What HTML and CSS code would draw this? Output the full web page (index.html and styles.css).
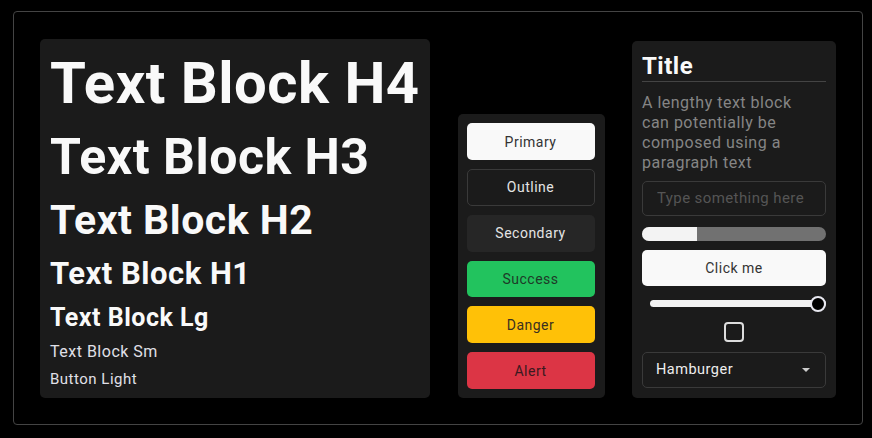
FILE: index.html
```html
<!DOCTYPE html>
<html lang="en">
<head>
    <meta charset="UTF-8">
    <meta name="viewport" content="width=device-width, initial-scale=1.0">
    <title>Theme Preview</title>
    <link rel="stylesheet" href="styles.css">
</head>
<body>
    <main class="frame">
        <section class="card type-card">
            <h4 class="text-h4">Text Block H4</h4>
            <h3 class="text-h3">Text Block H3</h3>
            <h2 class="text-h2">Text Block H2</h2>
            <h1 class="text-h1">Text Block H1</h1>
            <p class="text-lg">Text Block Lg</p>
            <p class="text-sm">Text Block Sm</p>
            <p class="text-button">Button Light</p>
        </section>
        <section class="card button-card">
            <button class="btn btn-primary">Primary</button>
            <button class="btn btn-outline">Outline</button>
            <button class="btn btn-secondary">Secondary</button>
            <button class="btn btn-success">Success</button>
            <button class="btn btn-danger">Danger</button>
            <button class="btn btn-alert">Alert</button>
        </section>
        <section class="card form-card">
            <h5 class="title">Title</h5>
            <p class="lead">A lengthy text block can potentially be composed using a paragraph text</p>
            <input class="field" type="text" placeholder="Type something here">
            <div class="progress"><div class="progress-fill" style="width: 30%"></div></div>
            <button class="btn btn-primary btn-wide">Click me</button>
            <input class="slider" type="range" min="0" max="100" value="100">
            <input class="check" type="checkbox">
            <div class="select">
                <span>Hamburger</span>
                <span class="caret"></span>
            </div>
        </section>
    </main>
</body>
</html>
```

FILE: styles.css
```css
* {
    box-sizing: border-box;
}
body {
    margin: 0;
    background: #000;
    font-family: Roboto, "Liberation Sans", sans-serif;
    letter-spacing: 0.5px;
    color: #f9f9f9;
}
.frame {
    margin: 11px 0 0 13px;
    width: 850px;
    height: 414px;
    border: 1px solid #444;
    border-radius: 4px;
    padding: 27px 26px 26px;
    display: flex;
    align-items: flex-end;
    justify-content: space-between;
}
.card {
    background: #1b1b1b;
    border-radius: 5px;
    display: flex;
    flex-flow: column;
}

/* type scale */
.type-card {
    width: 390px;
    padding: 10px 10px 10px;
    gap: 9px;
}
.type-card > * {
    margin: 0;
    line-height: 1.2;
    font-weight: 700;
    white-space: nowrap;
}
.text-h4 {
    font-size: 58px;
}
.text-h3 {
    font-size: 50px;
}
.text-h2 {
    font-size: 41px;
}
.text-h1 {
    font-size: 31px;
}
.type-card .text-lg {
    font-size: 25px;
    margin-top: 2px;
}
.type-card .text-sm {
    font-size: 16px;
    font-weight: 400;
    color: #e0e0e8;
}
.type-card .text-button {
    font-size: 15px;
    font-weight: 400;
    color: #e0e0e8;
}

/* buttons */
.button-card {
    width: 147px;
    padding: 9px 10px 9px 9px;
    gap: 9px;
}
.btn {
    height: 36.8px;
    border: 1px solid transparent;
    border-radius: 5px;
    font: 400 14px Roboto, "Liberation Sans", sans-serif;
    letter-spacing: 0.5px;
    color: #333;
    padding: 0;
}
.btn-primary {
    background: #f9f9f9;
}
.btn-outline {
    background: transparent;
    border-color: #3a3a3a;
    color: #e4e4e4;
}
.btn-secondary {
    background: #262626;
    color: #e4e4e4;
}
.btn-success {
    background: #22c35e;
    color: #1e3a28;
}
.btn-danger {
    background: #ffc107;
    color: #3a3020;
}
.btn-alert {
    background: #dc3545;
    color: #3a1a20;
}

/* form card */
.form-card {
    width: 204px;
    padding: 11px 10px 10.5px;
    gap: 9.5px;
}
.title {
    margin: 0;
    font-size: 24px;
    font-weight: 700;
    line-height: 28px;
    padding-bottom: 1px;
    border-bottom: 1px solid #444;
}
.lead {
    margin: 2px 0 0;
    max-width: 176px;
    font-size: 16px;
    line-height: 20px;
    color: #858585;
}
.field {
    height: 35px;
    margin-top: -2px;
    background: transparent;
    border: 1px solid #3a3a3a;
    border-radius: 5px;
    padding: 0 14px;
    font: 400 15px Roboto, "Liberation Sans", sans-serif;
    letter-spacing: 0.4px;
    color: #ddd;
}
.field::placeholder {
    color: #555;
}
.progress {
    height: 14px;
    margin-top: 1.5px;
    border-radius: 7px;
    background: #717171;
    overflow: hidden;
}
.progress-fill {
    height: 100%;
    background: #f3f3f3;
}
.btn-wide {
    height: 36px;
}
.slider {
    -webkit-appearance: none;
    appearance: none;
    margin: 0 0 0 8px;
    width: calc(100% - 8px);
    height: 16px;
    background: transparent;
}
.slider::-webkit-slider-runnable-track {
    height: 7px;
    border-radius: 4px;
    background: #f3f3f3;
}
.slider::-webkit-slider-thumb {
    -webkit-appearance: none;
    width: 16px;
    height: 16px;
    margin-top: -4.5px;
    border-radius: 50%;
    background: #000;
    border: 2px solid #e8e8f0;
}
.check {
    -webkit-appearance: none;
    appearance: none;
    align-self: center;
    margin: 0.5px 0 0;
    width: 20px;
    height: 20px;
    border: 2px solid #ddd;
    border-radius: 4px;
    background: transparent;
}
.select {
    height: 36px;
    margin-top: 0.5px;
    border: 1px solid #3a3a3a;
    border-radius: 5px;
    padding: 0 15px 0 13px;
    display: flex;
    align-items: center;
    justify-content: space-between;
    font-size: 14.5px;
    color: #eee;
}
.caret {
    width: 0;
    height: 0;
    border-left: 4.5px solid transparent;
    border-right: 4.5px solid transparent;
    border-top: 4.5px solid #ccc;
}
```
